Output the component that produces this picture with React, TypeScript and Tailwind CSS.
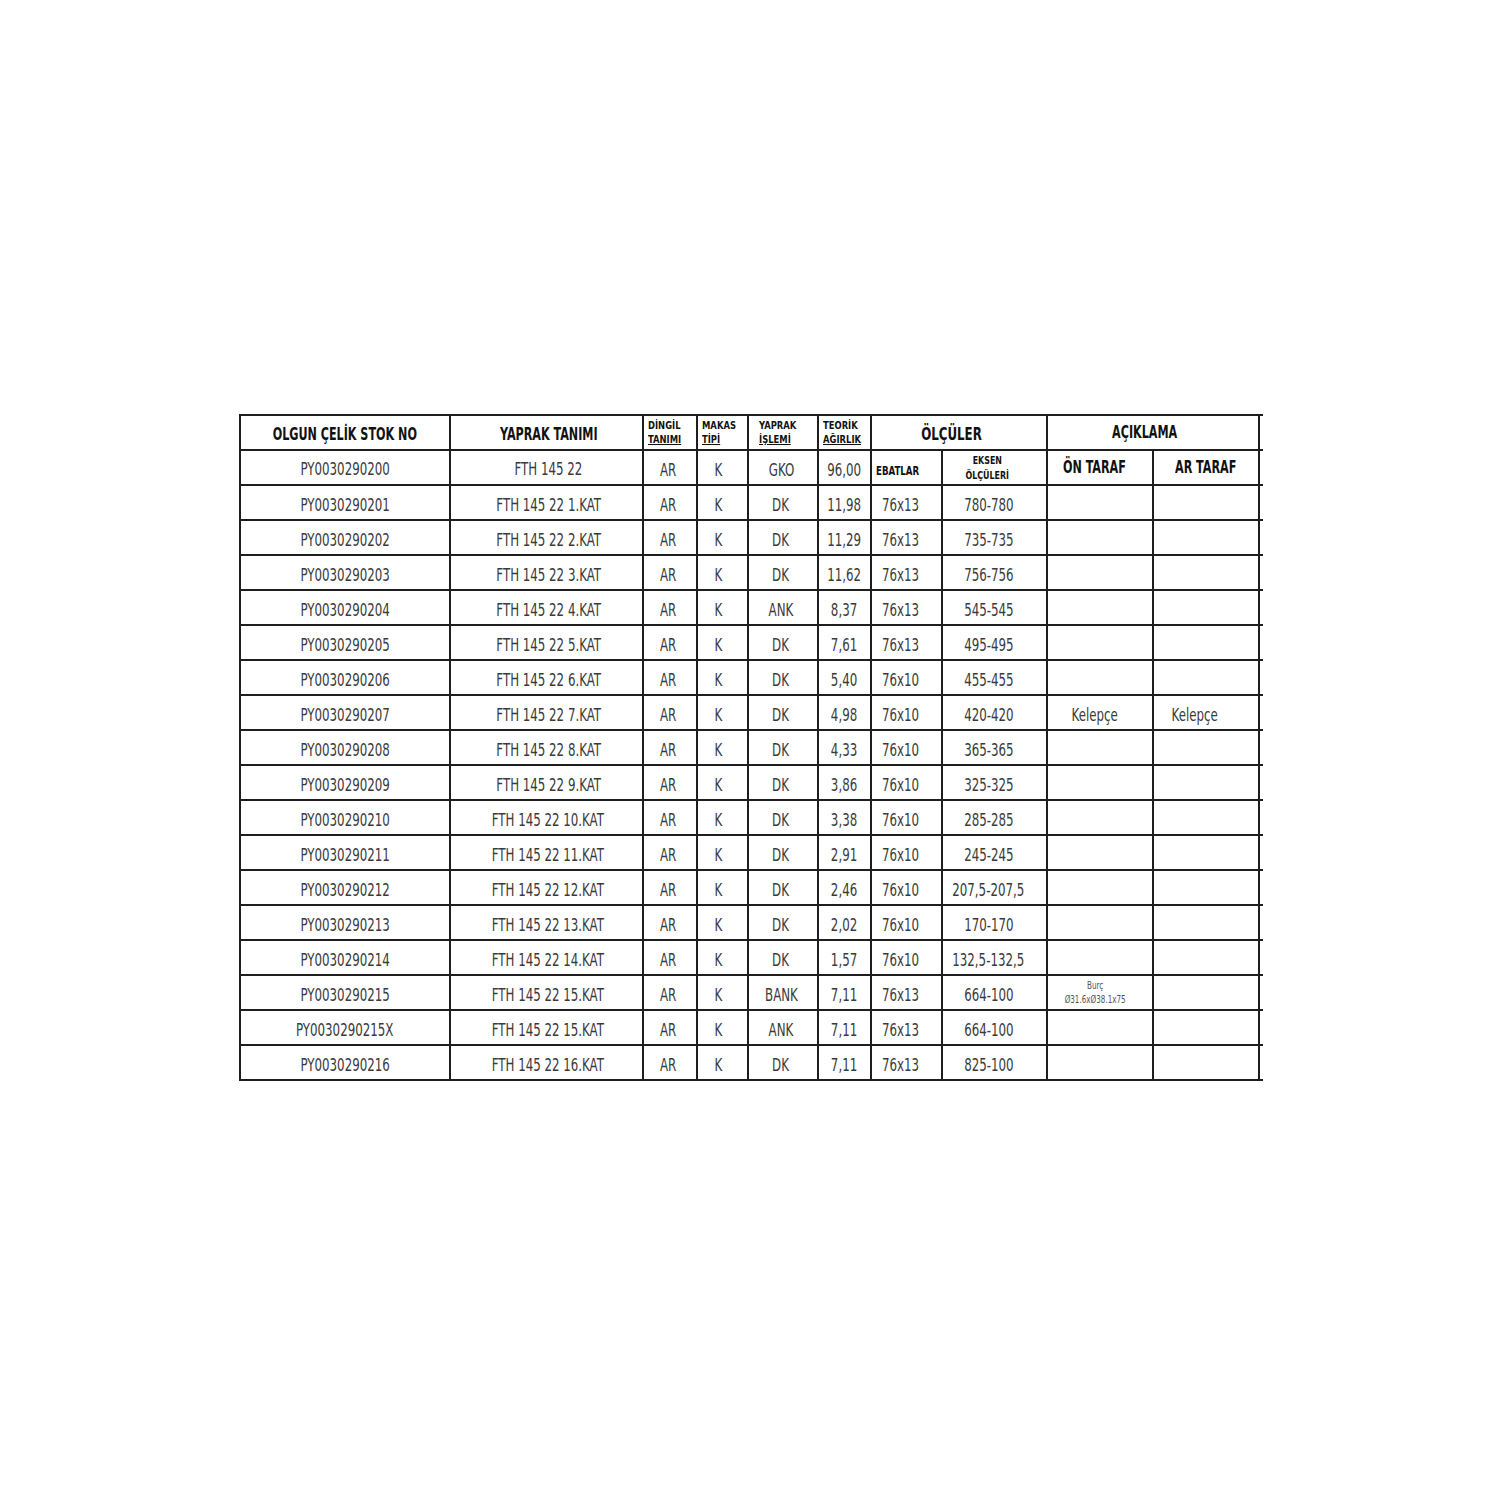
const rows: string[][] = [
  ['PY0030290201', 'FTH 145 22 1.KAT', 'AR', 'K', 'DK', '11,98', '76x13', '780-780', '', ''],
  ['PY0030290202', 'FTH 145 22 2.KAT', 'AR', 'K', 'DK', '11,29', '76x13', '735-735', '', ''],
  ['PY0030290203', 'FTH 145 22 3.KAT', 'AR', 'K', 'DK', '11,62', '76x13', '756-756', '', ''],
  ['PY0030290204', 'FTH 145 22 4.KAT', 'AR', 'K', 'ANK', '8,37', '76x13', '545-545', '', ''],
  ['PY0030290205', 'FTH 145 22 5.KAT', 'AR', 'K', 'DK', '7,61', '76x13', '495-495', '', ''],
  ['PY0030290206', 'FTH 145 22 6.KAT', 'AR', 'K', 'DK', '5,40', '76x10', '455-455', '', ''],
  ['PY0030290207', 'FTH 145 22 7.KAT', 'AR', 'K', 'DK', '4,98', '76x10', '420-420', 'Kelepçe', 'Kelepçe'],
  ['PY0030290208', 'FTH 145 22 8.KAT', 'AR', 'K', 'DK', '4,33', '76x10', '365-365', '', ''],
  ['PY0030290209', 'FTH 145 22 9.KAT', 'AR', 'K', 'DK', '3,86', '76x10', '325-325', '', ''],
  ['PY0030290210', 'FTH 145 22 10.KAT', 'AR', 'K', 'DK', '3,38', '76x10', '285-285', '', ''],
  ['PY0030290211', 'FTH 145 22 11.KAT', 'AR', 'K', 'DK', '2,91', '76x10', '245-245', '', ''],
  ['PY0030290212', 'FTH 145 22 12.KAT', 'AR', 'K', 'DK', '2,46', '76x10', '207,5-207,5', '', ''],
  ['PY0030290213', 'FTH 145 22 13.KAT', 'AR', 'K', 'DK', '2,02', '76x10', '170-170', '', ''],
  ['PY0030290214', 'FTH 145 22 14.KAT', 'AR', 'K', 'DK', '1,57', '76x10', '132,5-132,5', '', ''],
  ['PY0030290215', 'FTH 145 22 15.KAT', 'AR', 'K', 'BANK', '7,11', '76x13', '664-100', 'BURC', ''],
  ['PY0030290215X', 'FTH 145 22 15.KAT', 'AR', 'K', 'ANK', '7,11', '76x13', '664-100', '', ''],
  ['PY0030290216', 'FTH 145 22 16.KAT', 'AR', 'K', 'DK', '7,11', '76x13', '825-100', '', ''],
];

const cell = 'border-2 border-[#1e1e1e] h-[35px] p-0 align-middle';
const tail = 'border-y-2 border-x-0 border-[#1e1e1e] p-0';

// per-column alignment of the data text
const align = [
  'justify-center',
  'justify-center pl-[3px]',
  'justify-center pr-[5px]',
  'justify-center pr-[9px]',
  'justify-center pr-[4px]',
  'justify-center',
  'justify-start pl-[10px]',
  'justify-center pr-[11px]',
  'justify-center pr-[10px]',
  'justify-center pr-[22px]',
];

function T({ children, left }: { children: React.ReactNode; left?: boolean }) {
  return (
    <span className={`inline-block whitespace-nowrap scale-x-[0.73] ${left ? 'origin-left' : 'origin-center'}`}>
      {children}
    </span>
  );
}

function SmallHead({ a, b }: { a: string; b: string }) {
  return (
    <div className="flex flex-col items-start pl-[4px] pt-[2px] text-[11px] leading-[14px] font-bold text-[#111] h-[31px]">
      <span className="inline-block scale-x-[0.85] origin-left whitespace-nowrap">{a}</span>
      <span className="inline-block scale-x-[0.85] origin-left whitespace-nowrap underline underline-offset-1">{b}</span>
    </div>
  );
}

function DataCell({ v, i }: { v: string; i: number }) {
  if (v === 'BURC') {
    return (
      <div className="flex flex-col items-center text-[10px] leading-[14px] text-[#555] pr-[10px] pt-[1px]">
        <span className="inline-block scale-x-[0.8]">Burç</span>
        <span className="inline-block scale-x-[0.8] whitespace-nowrap">Ø31.6xØ38.1x75</span>
      </div>
    );
  }
  return (
    <div className={`flex ${align[i]} pt-[3px]`}>
      <T left={i === 6}>{v}</T>
    </div>
  );
}

function Head({ children, cls }: { children: React.ReactNode; cls: string }) {
  return <div className={`flex font-bold text-[17px] text-[#111] ${cls}`}>{children}</div>;
}

export default function App() {
  return (
    <div
      className="min-h-[1500px] w-[1500px] bg-white pt-[414px] pl-[239px]"
      style={{ fontFamily: '"DejaVu Sans Condensed", "DejaVu Sans", sans-serif' }}
    >
      <table className="table-fixed border-collapse w-[1024px] text-[18px] text-[#3a3a3a] [font-stretch:condensed]">
        <colgroup>
          <col className="w-[210px]" />
          <col className="w-[193px]" />
          <col className="w-[54px]" />
          <col className="w-[51px]" />
          <col className="w-[69px]" />
          <col className="w-[53px]" />
          <col className="w-[71px]" />
          <col className="w-[105px]" />
          <col className="w-[106px]" />
          <col className="w-[106px]" />
          <col className="w-[4px]" />
        </colgroup>
        <tbody>
          <tr>
            <td className={cell}>
              <Head cls="justify-center pt-[5px]">
                <T>OLGUN ÇELİK STOK NO</T>
              </Head>
            </td>
            <td className={cell}>
              <Head cls="justify-center pt-[5px] pl-[4px]">
                <T>YAPRAK TANIMI</T>
              </Head>
            </td>
            <td className={cell}>
              <SmallHead a="DİNGİL" b="TANIMI" />
            </td>
            <td className={cell}>
              <SmallHead a="MAKAS" b="TİPİ" />
            </td>
            <td className={cell}>
              <div className="pl-[6px]">
                <SmallHead a="YAPRAK" b="İŞLEMİ" />
              </div>
            </td>
            <td className={cell}>
              <SmallHead a="TEORİK" b="AĞIRLIK" />
            </td>
            <td className={cell} colSpan={2}>
              <Head cls="justify-center pt-[1px] pr-[14px] text-[18px]">
                <T>ÖLÇÜLER</T>
              </Head>
            </td>
            <td className={cell} colSpan={2}>
              <Head cls="justify-center pt-[1px] pr-[16px]">
                <T>AÇIKLAMA</T>
              </Head>
            </td>
            <td className={tail} />
          </tr>
          <tr>
            <td className={cell}>
              <div className="flex justify-center pt-[2px]">
                <T>PY0030290200</T>
              </div>
            </td>
            <td className={cell}>
              <div className="flex justify-center pt-[2px] pl-[3px]">
                <T>FTH 145 22</T>
              </div>
            </td>
            <td className={cell}>
              <div className="flex justify-center pr-[5px] pt-[3px]">
                <T>AR</T>
              </div>
            </td>
            <td className={cell}>
              <div className="flex justify-center pr-[9px] pt-[3px]">
                <T>K</T>
              </div>
            </td>
            <td className={cell}>
              <div className="flex justify-center pr-[4px] pt-[3px]">
                <T>GKO</T>
              </div>
            </td>
            <td className={cell}>
              <div className="flex justify-center pt-[3px]">
                <T>96,00</T>
              </div>
            </td>
            <td className={cell}>
              <div className="flex justify-start pl-[4px] pt-[6px] font-bold text-[12px] text-[#111]">
                <span className="inline-block scale-x-[0.8] origin-left whitespace-nowrap">EBATLAR</span>
              </div>
            </td>
            <td className={cell}>
              <div className="flex flex-col items-center pr-[14px] text-[11px] leading-[15px] font-bold text-[#111]">
                <span className="inline-block scale-x-[0.8] whitespace-nowrap">EKSEN</span>
                <span className="inline-block scale-x-[0.8] whitespace-nowrap">ÖLÇÜLERİ</span>
              </div>
            </td>
            <td className={cell}>
              <Head cls="justify-start pl-[15px] pt-[1px]">
                <T left>ÖN TARAF</T>
              </Head>
            </td>
            <td className={cell}>
              <Head cls="justify-start pl-[21px] pt-[1px]">
                <T left>AR TARAF</T>
              </Head>
            </td>
            <td className={tail} />
          </tr>
          {rows.map((r) => (
            <tr key={r[0]}>
              {r.map((v, i) => (
                <td key={i} className={cell}>
                  <DataCell v={v} i={i} />
                </td>
              ))}
              <td className={tail} />
            </tr>
          ))}
        </tbody>
      </table>
    </div>
  );
}
